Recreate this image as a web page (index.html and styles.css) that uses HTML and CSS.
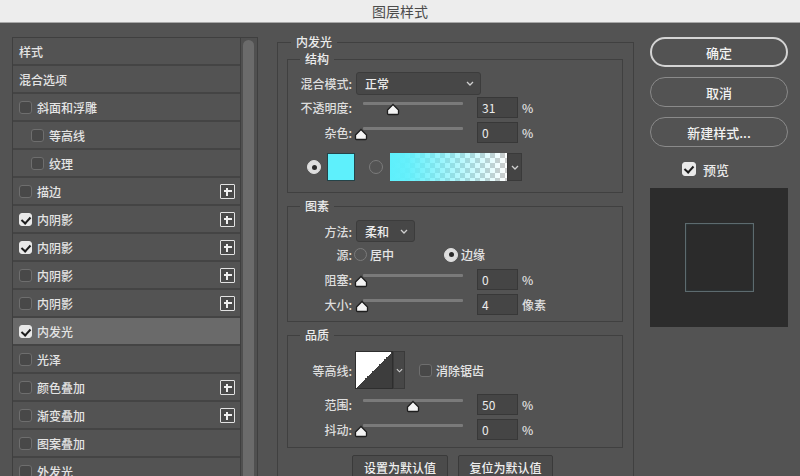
FILE: index.html
```html
<!DOCTYPE html>
<html lang="zh">
<head>
<meta charset="utf-8">
<link rel="stylesheet" href="styles.css">
</head>
<body>
<div class="titlebar">图层样式</div>
<div class="main">
  <div class="styles-panel">
    <ul class="style-list">
      <li class="row">样式</li>
      <li class="row">混合选项</li>
      <li class="row"><span class="cb"></span>斜面和浮雕</li>
      <li class="row indent"><span class="cb"></span>等高线</li>
      <li class="row indent"><span class="cb"></span>纹理</li>
      <li class="row"><span class="cb"></span>描边<span class="plus"></span></li>
      <li class="row"><span class="cb on"></span>内阴影<span class="plus"></span></li>
      <li class="row"><span class="cb on"></span>内阴影<span class="plus"></span></li>
      <li class="row"><span class="cb"></span>内阴影<span class="plus"></span></li>
      <li class="row"><span class="cb"></span>内阴影<span class="plus"></span></li>
      <li class="row active"><span class="cb on"></span>内发光</li>
      <li class="row"><span class="cb"></span>光泽</li>
      <li class="row"><span class="cb"></span>颜色叠加<span class="plus"></span></li>
      <li class="row"><span class="cb"></span>渐变叠加<span class="plus"></span></li>
      <li class="row"><span class="cb"></span>图案叠加</li>
      <li class="row"><span class="cb"></span>外发光</li>
    </ul>
    <div class="scroll-col"><div class="scroll-thumb"></div></div>
  </div>

  <div class="center">
    <fieldset class="group outer">
      <legend>内发光</legend>

      <fieldset class="group sub s1">
        <legend>结构</legend>
        <div class="frow h23">
          <span class="lbl">混合模式:</span>
          <div class="select w125"><span>正常</span><svg class="chev" viewBox="0 0 8 5"><polyline points="1,1 4,4 7,1"/></svg></div>
        </div>
        <div class="frow h25">
          <span class="lbl">不透明度:</span>
          <div class="slider"><div class="track"></div><svg class="thumb" style="left:23px" viewBox="0 0 14 13"><path d="M1.5 7 L7 1.5 L12.5 7 L12.5 10.5 Q12.5 11.5 11.5 11.5 L2.5 11.5 Q1.5 11.5 1.5 10.5 Z"/></svg></div>
          <div class="num">31</div><span class="unit">%</span>
        </div>
        <div class="frow h25">
          <span class="lbl">杂色:</span>
          <div class="slider"><div class="track"></div><svg class="thumb" style="left:-9px" viewBox="0 0 14 13"><path d="M1.5 7 L7 1.5 L12.5 7 L12.5 10.5 Q12.5 11.5 11.5 11.5 L2.5 11.5 Q1.5 11.5 1.5 10.5 Z"/></svg></div>
          <div class="num">0</div><span class="unit">%</span>
        </div>
        <div class="frow color-row">
          <span class="radio on"></span>
          <span class="swatch"></span>
          <span class="radio radio-grad"></span>
          <span class="gradient"></span>
          <span class="grad-drop"><svg class="chev" viewBox="0 0 8 5"><polyline points="1,1 4,4 7,1"/></svg></span>
        </div>
      </fieldset>

      <fieldset class="group sub s2">
        <legend>图素</legend>
        <div class="frow h22">
          <span class="lbl">方法:</span>
          <div class="select w59"><span>柔和</span><svg class="chev" viewBox="0 0 8 5"><polyline points="1,1 4,4 7,1"/></svg></div>
        </div>
        <div class="frow h25 src">
          <span class="lbl lbl-tight">源:</span>
          <span class="opt first"><span class="radio small"></span>居中</span>
          <span class="opt"><span class="radio on"></span>边缘</span>
        </div>
        <div class="frow h25">
          <span class="lbl">阻塞:</span>
          <div class="slider"><div class="track"></div><svg class="thumb" style="left:-9px" viewBox="0 0 14 13"><path d="M1.5 7 L7 1.5 L12.5 7 L12.5 10.5 Q12.5 11.5 11.5 11.5 L2.5 11.5 Q1.5 11.5 1.5 10.5 Z"/></svg></div>
          <div class="num">0</div><span class="unit">%</span>
        </div>
        <div class="frow h25">
          <span class="lbl">大小:</span>
          <div class="slider"><div class="track"></div><svg class="thumb" style="left:-8px" viewBox="0 0 14 13"><path d="M1.5 7 L7 1.5 L12.5 7 L12.5 10.5 Q12.5 11.5 11.5 11.5 L2.5 11.5 Q1.5 11.5 1.5 10.5 Z"/></svg></div>
          <div class="num">4</div><span class="unit">像素</span>
        </div>
      </fieldset>

      <fieldset class="group sub s3">
        <legend>品质</legend>
        <div class="frow contour-row">
          <span class="lbl">等高线:</span>
          <span class="contour"></span>
          <span class="contour-drop"><svg class="chev" viewBox="0 0 8 5"><polyline points="1,1 4,4 7,1"/></svg></span>
          <span class="cb aa"></span><span class="aa-text">消除锯齿</span>
        </div>
        <div class="frow h25 range-row">
          <span class="lbl">范围:</span>
          <div class="slider"><div class="track"></div><svg class="thumb" style="left:43px" viewBox="0 0 14 13"><path d="M1.5 7 L7 1.5 L12.5 7 L12.5 10.5 Q12.5 11.5 11.5 11.5 L2.5 11.5 Q1.5 11.5 1.5 10.5 Z"/></svg></div>
          <div class="num">50</div><span class="unit">%</span>
        </div>
        <div class="frow h25">
          <span class="lbl">抖动:</span>
          <div class="slider"><div class="track"></div><svg class="thumb" style="left:-9px" viewBox="0 0 14 13"><path d="M1.5 7 L7 1.5 L12.5 7 L12.5 10.5 Q12.5 11.5 11.5 11.5 L2.5 11.5 Q1.5 11.5 1.5 10.5 Z"/></svg></div>
          <div class="num">0</div><span class="unit">%</span>
        </div>
      </fieldset>

      <div class="defaults">
        <button class="dbtn">设置为默认值</button>
        <button class="dbtn">复位为默认值</button>
      </div>
    </fieldset>
  </div>

  <div class="right">
    <button class="pill primary">确定</button>
    <button class="pill">取消</button>
    <button class="pill">新建样式...</button>
    <div class="preview-check"><span class="cb on"></span>预览</div>
    <div class="preview"><div class="preview-square"></div></div>
  </div>
</div>
</body>
</html>
```

FILE: styles.css
```css
* { box-sizing: border-box; }
html, body {
  margin: 0;
  padding: 0;
}
body {
  width: 800px;
  height: 476px;
  overflow: hidden;
  background: #535353;
  color: #e4e4e4;
  font-family: "Noto Sans CJK SC", "Noto Sans", sans-serif;
  font-size: 12px;
  font-weight: 500;
}
.titlebar {
  height: 23px;
  background: #ededed;
  border-bottom: 1px solid #a8a8a8;
  color: #4b4b4b;
  font-size: 14px;
  font-weight: 400;
  text-align: center;
  line-height: 22px;
}
.main {
  display: flex;
  align-items: flex-start;
  padding-top: 14px;
}

/* left list */
.styles-panel {
  display: flex;
  margin-left: 12px;
  width: 246px;
  height: 460px;
  border: 1px solid #3f3f3f;
}
.style-list {
  list-style: none;
  margin: 0;
  padding: 0;
  width: 228px;
  border-right: 1px solid #3f3f3f;
}
.row {
  display: flex;
  align-items: center;
  height: 28px;
  border-bottom: 2px solid #444;
  padding-left: 6px;
  padding-top: 1px;
}
.row.indent { padding-left: 18px; }
.row.active { background: #6a6a6a; }
.cb {
  width: 13px;
  height: 13px;
  border: 1px solid #6e6e6e;
  border-radius: 3px;
  background: #484848;
  margin-right: 5px;
  flex: none;
  position: relative;
}
.cb.on {
  background: #e9e9e9;
  border-color: #e9e9e9;
}
.cb.on::after {
  content: "";
  position: absolute;
  left: 3px;
  top: 1px;
  width: 4px;
  height: 7px;
  border: solid #1d1d1d;
  border-width: 0 2px 2px 0;
  transform: rotate(42deg);
}
.plus {
  margin-left: auto;
  margin-right: 5px;
  width: 15px;
  height: 15px;
  border: 1.5px solid #e2e2e2;
  border-radius: 1px;
  background: #4a4a4a;
  position: relative;
}
.plus::before, .plus::after {
  content: "";
  position: absolute;
  background: #f0f0f0;
}
.plus::before { left: 2.5px; right: 2.5px; top: 5px; height: 2px; }
.plus::after { top: 2.5px; bottom: 2.5px; left: 5px; width: 2px; }
.scroll-col {
  flex: 1;
  padding: 2px 3px 0 2px;
  background: #505050;
}
.scroll-thumb {
  height: 100%;
  background: #6b6b6b;
  border-radius: 6px 6px 0 0;
}

/* center */
.center {
  margin-left: 19px;
  margin-top: -1px;
}
fieldset.group {
  margin: 0;
  border: 1px solid #404040;
  padding: 0;
}
fieldset.group > legend {
  line-height: 12px;
  padding: 0 5px;
  margin-left: 12px;
  color: #ececec;
}
fieldset.outer > legend { margin-left: 4px; }
.outer {
  width: 357px;
  height: 460px;
  padding: 5px 10px 0 9px !important;
}
.sub { width: 336px; }
.s1 { padding: 7px 0 11px !important; }
.s2 { margin-top: 7px !important; padding: 8px 0 4px !important; }
.s3 { margin-top: 7px !important; padding: 10px 0 5px !important; }

.frow {
  display: flex;
  align-items: center;
}
.h22 { height: 22px; }
.h23 { height: 23px; }
.h25 { height: 25px; }
.lbl {
  width: 64px;
  text-align: right;
  flex: none;
  color: #dedede;
  white-space: nowrap;
}
.select {
  margin-left: 4px;
  height: 100%;
  background: #474747;
  border: 1px solid #3c3c3c;
  border-radius: 3px;
  display: flex;
  align-items: center;
  padding: 0 6px 0 8px;
  color: #ececec;
}
.select span { flex: 1; }
.w125 { width: 125px; }
.w59 { width: 59px; }
.chev {
  width: 8px;
  height: 5px;
  fill: none;
  stroke: #cfcfcf;
  stroke-width: 1.3;
}
.slider {
  position: relative;
  margin-left: 11px;
  width: 100px;
  height: 25px;
  flex: none;
}
.track {
  margin-top: 7px;
  height: 3px;
  background: #7a7a7a;
  border-radius: 1px;
}
.thumb {
  position: absolute;
  top: 8px;
  width: 14px;
  height: 13px;
  fill: #f4f4f4;
  stroke: #1e1e1e;
  stroke-width: 1.3;
}
.num {
  margin-left: 14px;
  width: 41px;
  height: 21px;
  background: #454545;
  border: 1px solid #383838;
  padding-left: 4px;
  line-height: 19px;
  color: #ececec;
  font-weight: 400;
}
.unit {
  margin-left: 4px;
  color: #e0e0e0;
}

.color-row {
  margin-top: 8px;
  height: 28px;
  padding-left: 19px;
}
.radio {
  width: 14px;
  height: 14px;
  border-radius: 50%;
  border: 1px solid #7b7b7b;
  background: #545454;
  flex: none;
  position: relative;
}
.radio.on {
  background: #dedede;
  border-color: #dedede;
}
.radio.on::after {
  content: "";
  position: absolute;
  left: 3.5px;
  top: 3.5px;
  width: 5px;
  height: 5px;
  border-radius: 50%;
  background: #2a2a2a;
}
.radio.small { width: 13px; height: 13px; }
.swatch {
  margin-left: 6px;
  width: 28px;
  height: 28px;
  background: #5ef0fc;
  border: 1px solid #244348;
}
.radio-grad { margin-left: 14px; }
.gradient {
  margin-left: 7px;
  width: 117px;
  height: 28px;
  background:
    linear-gradient(to right, #5ef0fc 0%, rgba(94,240,252,0.95) 15%, rgba(94,240,252,0) 100%),
    conic-gradient(#ffffff 25%, #cdcdcd 25% 50%, #ffffff 50% 75%, #cdcdcd 75%) 0 0 / 10px 10px;
}
.grad-drop {
  width: 15px;
  height: 28px;
  background: #444;
  border: 1px solid #3a3a3a;
  display: flex;
  align-items: center;
  justify-content: center;
}

.src .lbl-tight { margin-right: 2px; }
.opt {
  display: flex;
  align-items: center;
  gap: 3px;
  color: #e6e6e6;
}
.opt.first { width: 90px; }

.contour-row { height: 38px; }
.contour {
  margin-left: 3px;
  width: 38px;
  height: 38px;
  border: 1px solid #2e2e2e;
  background: linear-gradient(to bottom right, #ffffff 50%, #3d3d3d 50%);
}
.contour-drop {
  width: 12px;
  height: 38px;
  background: #474747;
  border: 1px solid #3a3a3a;
  display: flex;
  align-items: center;
  justify-content: center;
}
.contour-drop .chev { width: 7px; }
.cb.aa { margin-left: 14px; margin-right: 4px; }
.aa-text { color: #e6e6e6; }
.range-row { margin-top: 3px; }

.defaults {
  display: flex;
  gap: 10px;
  margin-top: 7px;
  padding-left: 65px;
}
.dbtn {
  height: 25px;
  width: 96px;
  background: #4b4b4b;
  border: 1px solid #3a3a3a;
  border-radius: 2px;
  color: #efefef;
  font-family: inherit;
  font-size: 12px;
  font-weight: 500;
  padding: 0;
}
.dbtn + .dbtn { width: 95px; }

/* right */
.right {
  margin-left: 16px;
  width: 138px;
  display: flex;
  flex-direction: column;
}
.pill {
  height: 30px;
  border-radius: 15px;
  border: 1.5px solid #8a8a8a;
  background: #535353;
  color: #f2f2f2;
  font-family: inherit;
  font-size: 13px;
  font-weight: 500;
  padding: 0;
  margin-bottom: 10px;
}
.pill.primary { border: 2px solid #d4d4d4; }
.preview-check {
  margin-top: 3px;
  height: 18px;
  display: flex;
  align-items: center;
  padding-left: 32px;
  font-size: 13px;
  color: #eaeaea;
}
.preview-check .cb { width: 14px; height: 14px; margin-right: 7px; }
.preview {
  margin-top: 10px;
  height: 139px;
  background: #2c2c2c;
  display: flex;
  align-items: center;
  justify-content: center;
}
.preview-square {
  width: 69px;
  height: 69px;
  border: 1px solid #5d6b6f;
  background: #2b2b2b;
  box-shadow: inset 0 0 2px rgba(94,240,252,0.15);
}
```
